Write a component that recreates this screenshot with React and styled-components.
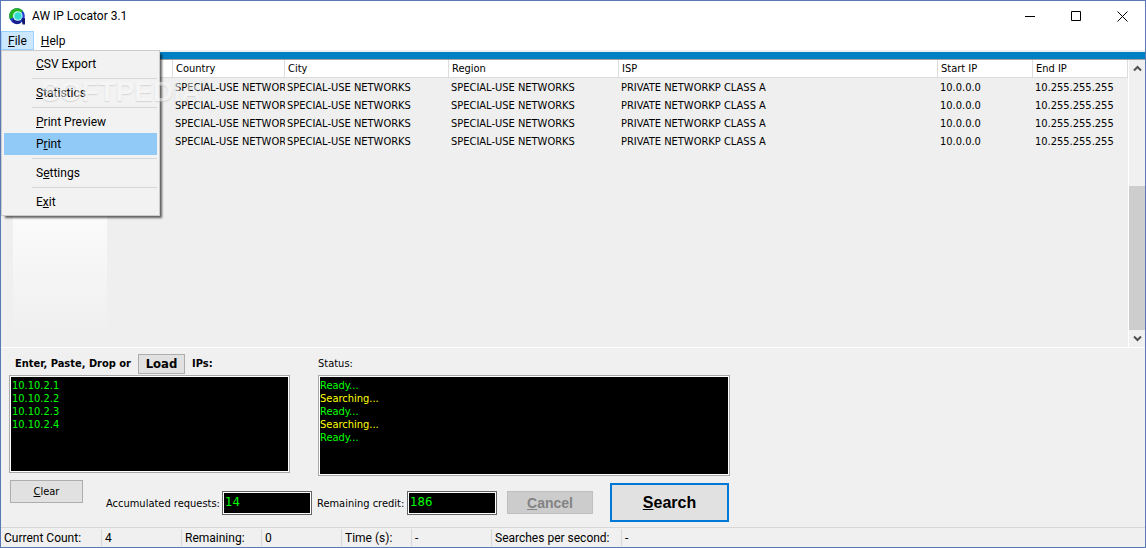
import React from "react";
import styled, { createGlobalStyle } from "styled-components";

const tahoma = `Tahoma, "DejaVu Sans Condensed", "Noto Sans", sans-serif`;
const segoe = `"Segoe UI", Roboto, "Open Sans", sans-serif`;

const GlobalStyle = createGlobalStyle`
  * {
    box-sizing: border-box;
  }
  body {
    margin: 0;
    color: #000;
    font: 11px/14px ${tahoma};
  }
  button, input, textarea {
    margin: 0;
    border-radius: 0;
    font: inherit;
    color: inherit;
  }
`;

const Window = styled.div`
  display: flex;
  flex-direction: column;
  height: 100vh;
  overflow: hidden;
  border: 1px solid #5878b8;
  background: #f0f0f0;
`;
const TitleBar = styled.header`
  display: flex;
  align-items: center;
  gap: 6px;
  height: 30px;
  padding-left: 8px;
  background: #fff;
`;
const Title = styled.h1`
  flex: 1;
  margin: 0;
  font: 12px/16px ${segoe};
`;
const WindowButtons = styled.div`
  display: flex;
`;
const WindowButton = styled.button`
  display: flex;
  align-items: center;
  justify-content: center;
  width: 46px;
  height: 28px;
  padding: 0;
  border: 0;
  background: none;
`;
const MenuBar = styled.nav`
  display: flex;
  height: 19px;
  background: #fff;
  font: 12px/16px ${segoe};
`;
const MenuWrap = styled.div`
  position: relative;
`;
const MenuButton = styled.button`
  height: 19px;
  padding: 0 6px;
  border: 1px solid ${(props) => (props.$open ? "#99d1ff" : "#fff")};
  background: ${(props) => (props.$open ? "#cce8ff" : "#fff")};
`;
const Menu = styled.div`
  position: absolute;
  z-index: 2;
  top: 19px;
  left: 0;
  width: 159px;
  padding: 2px;
  border: 1px solid #ccc;
  background: #f2f2f2;
  box-shadow: 3px 3px 2px -1px rgba(0, 0, 0, 0.6);
`;
const MenuItem = styled.button`
  display: block;
  width: 100%;
  height: 22px;
  padding: 0 0 0 32px;
  border: 0;
  text-align: left;
  background: ${(props) => (props.$active ? "#91c9f7" : "none")};
`;
const Separator = styled.hr`
  height: 1px;
  margin: 3px 0 3px 28px;
  border: 0;
  background: #d7d7d7;
`;
const Watermark = styled.div`
  position: absolute;
  z-index: 3;
  top: 43px;
  left: 40px;
  display: flex;
  font: bold 28px/36px "Liberation Sans", sans-serif;
  color: #f8f8f8;
  text-shadow: 0 1px 1px #bbb;
  opacity: 0.5;
  pointer-events: none;
`;
const Mark = styled.span`
  font-size: 8px;
  line-height: 16px;
`;
const Accent = styled.div`
  height: 10px;
  border-top: 2px solid #f0f0f0;
  border-bottom: 1px solid #a0a0a0;
  background: #0080c4;
`;
const ListView = styled.main`
  display: flex;
  flex: 1;
  min-height: 0;
  border-bottom: 1px solid #fff;
  background: #efefef;
`;
const TableArea = styled.div`
  flex: 1;
  min-width: 0;
  background: linear-gradient(#fff 40%, #efefef 95%) 12px 0 / 94px 100% no-repeat;
`;
const Table = styled.table`
  width: 100%;
  table-layout: fixed;
  border-collapse: separate;
  border-spacing: 0;
`;
const Col = styled.col`
  width: ${(props) => props.$width};
`;
const Th = styled.th`
  height: 18px;
  padding: 1px 0 0 3px;
  border-right: 1px solid #dcdcdc;
  border-bottom: 1px solid #dcdcdc;
  background: #fff;
  font-weight: 400;
  text-align: left;
`;
const Td = styled.td`
  height: 18px;
  padding: 2px 0 0 2px;
  overflow: hidden;
  white-space: nowrap;
`;
const ScrollBar = styled.div`
  display: flex;
  flex-direction: column;
  width: 17px;
  border-left: 1px solid #fff;
  background: #f0f0f0;
`;
const ScrollButton = styled.button`
  display: flex;
  align-items: center;
  justify-content: center;
  height: 17px;
  padding: 0;
  border: 0;
  background: none;
`;
const Track = styled.div`
  display: flex;
  flex: 1;
  flex-direction: column;
  justify-content: flex-end;
`;
const Thumb = styled.div`
  height: 57%;
  background: #cdcdcd;
`;
const Panel = styled.section`
  padding: 0 8px 5px;
`;
const Boxes = styled.div`
  display: flex;
  gap: 28px;
`;
const Field = styled.div`
  display: flex;
  flex-direction: column;
  width: ${(props) => props.$width};
`;
const FieldHead = styled.div`
  display: flex;
  align-items: center;
  gap: 7px;
  height: 27px;
  padding: 4px 0 0 ${(props) => (props.$bold ? "6px" : "0")};
  font-weight: ${(props) => (props.$bold ? 700 : 400)};
`;
const LoadButton = styled.button`
  width: 47px;
  height: 20px;
  padding: 0;
  border: 1px solid #adadad;
  background: #e1e1e1;
  font-size: 13px;
`;
const IpBox = styled.textarea`
  height: 98px;
  padding: 3px 2px;
  border: 1px solid #a8a8ac;
  outline: 1px solid #fff;
  outline-offset: -2px;
  background: #000;
  color: #00ff00;
  line-height: 13px;
  resize: none;
`;
const StatusBox = styled.div`
  height: 101px;
  padding: 3px 1px;
  border: 1px solid #a8a8ac;
  outline: 1px solid #fff;
  outline-offset: -2px;
  background: #000;
  line-height: 13px;
`;
const Line = styled.div`
  color: ${(props) => (props.$busy ? "#ffff00" : "#00ff00")};
`;
const Actions = styled.div`
  display: flex;
  align-items: flex-end;
  gap: 23px;
  height: 46px;
`;
const ClearButton = styled.button`
  align-self: flex-start;
  width: 73px;
  height: 23px;
  margin: 4px 0 0 1px;
  padding: 0;
  border: 1px solid #adadad;
  background: #e1e1e1;
`;
const Controls = styled.div`
  display: flex;
  align-items: center;
`;
const CounterLabel = styled.label`
  width: ${(props) => props.$width};
  padding-top: 2px;
  white-space: nowrap;
`;
const Counter = styled.input`
  width: 90px;
  height: 24px;
  margin-right: 5px;
  padding: 0 2px 2px;
  border: 1px solid #646464;
  outline: 1px solid #fff;
  outline-offset: -2px;
  background: #000;
  color: #00ff00;
  font-size: 13px;
`;
const CancelButton = styled.button`
  width: 86px;
  height: 23px;
  margin: 0 17px 0 5px;
  padding: 0;
  border: 1px solid #bfbfbf;
  background: #ccc;
  color: #838383;
  font: bold 14px/16px "Liberation Sans", Arial, sans-serif;
`;
const SearchButton = styled.button`
  width: 119px;
  height: 39px;
  padding: 0;
  border: 2px solid #0078d7;
  background: #e1e1e1;
  font: bold 16px/18px "Liberation Sans", Arial, sans-serif;
`;
const StatusBar = styled.footer`
  display: flex;
  height: 20px;
  padding-top: 1px;
  border-top: 1px solid #d7d7d7;
  font: 12px/18px ${segoe};
`;
const StatusCell = styled.span`
  width: ${(props) => props.$width};
  height: 17px;
  padding-left: 3px;
  border-right: ${(props) => (props.$last ? "0" : "1px solid #d7d7d7")};
  white-space: nowrap;
`;

const columns = [
  { title: "", width: "172px" },
  { title: "Country", width: "112px" },
  { title: "City", width: "164px" },
  { title: "Region", width: "170px" },
  { title: "ISP", width: "auto" },
  { title: "Start IP", width: "95px" },
  { title: "End IP", width: "95px" },
];
const ips = ["10.10.2.1", "10.10.2.2", "10.10.2.3", "10.10.2.4"];
const network = "SPECIAL-USE NETWORKS";
const log = ["Ready...", "Searching...", "Ready...", "Searching...", "Ready..."];
const statusCells = [
  ["Current Count:", "101px"],
  ["4", "80px"],
  ["Remaining:", "80px"],
  ["0", "80px"],
  ["Time (s):", "70px"],
  ["-", "80px"],
  ["Searches per second:", "130px"],
  ["-", "auto"],
];

const Logo = () => (
  <svg width="17" height="17" viewBox="0 0 17 17" aria-hidden="true">
    <circle cx="8" cy="8" r="7.8" fill="#1f3fd0" />
    <path d="M.8 11A7.800 7.800 0 0 1 14 3L11 6A4.200 4.200 0 0 0 4.500 9.500z" fill="#22b422" />
    <path d="M3 14a7.800 7.800 0 0 0 9 1l-2-4-5-1z" fill="#16208c" />
    <circle cx="8.800" cy="8" r="4.800" fill="#d4fbf4" />
    <circle cx="9" cy="8" r="3.700" fill="#35dcd2" />
    <path d="M12.500 10.500 16 10v6.500h-2.500z" fill="#14186c" />
  </svg>
);

const Key = ({ text, at = 0 }) => (
  <>
    {text.slice(0, at)}
    <u>{text[at]}</u>
    {text.slice(at + 1)}
  </>
);

const FileMenu = () => (
  <Menu>
    <MenuItem><Key text="CSV Export" /></MenuItem>
    <Separator />
    <MenuItem><Key text="Statistics" /></MenuItem>
    <Separator />
    <MenuItem><Key text="Print Preview" /></MenuItem>
    <MenuItem $active><Key text="Print" at={1} /></MenuItem>
    <Separator />
    <MenuItem><Key text="Settings" at={1} /></MenuItem>
    <Separator />
    <MenuItem><Key text="Exit" at={1} /></MenuItem>
  </Menu>
);

const Results = () => (
  <ListView>
    <TableArea>
      <Table>
        <colgroup>
          {columns.map((c, i) => (
            <Col key={i} $width={c.width} />
          ))}
        </colgroup>
        <thead>
          <tr>
            {columns.map((c, i) => (
              <Th key={i}>{c.title}</Th>
            ))}
          </tr>
        </thead>
        <tbody>
          {ips.map((ip) => (
            <tr key={ip}>
              <Td />
              <Td>{network}</Td>
              <Td>{network}</Td>
              <Td>{network}</Td>
              <Td>PRIVATE NETWORKP CLASS A</Td>
              <Td>10.0.0.0</Td>
              <Td>10.255.255.255</Td>
            </tr>
          ))}
        </tbody>
      </Table>
    </TableArea>
    <ScrollBar>
      <ScrollButton aria-label="Scroll up">
        <svg width="9" height="7" viewBox="0 0 9 7">
          <path d="M1 5.500 4.500 2 8 5.500" fill="none" stroke="#505050" strokeWidth="2" />
        </svg>
      </ScrollButton>
      <Track>
        <Thumb />
      </Track>
      <ScrollButton aria-label="Scroll down">
        <svg width="9" height="7" viewBox="0 0 9 7">
          <path d="M1 1.500 4.500 5 8 1.500" fill="none" stroke="#505050" strokeWidth="2" />
        </svg>
      </ScrollButton>
    </ScrollBar>
  </ListView>
);

const App = () => {
  return (
    <Window>
      <GlobalStyle />
      <TitleBar>
        <Logo />
        <Title>AW IP Locator 3.1</Title>
        <WindowButtons>
          <WindowButton aria-label="Minimize">
            <svg width="11" height="11" viewBox="0 0 11 11">
              <path d="M0 5.500h10" stroke="#000" />
            </svg>
          </WindowButton>
          <WindowButton aria-label="Maximize">
            <svg width="11" height="11" viewBox="0 0 11 11">
              <path d="M.5 .5h9v9h-9z" fill="none" stroke="#000" />
            </svg>
          </WindowButton>
          <WindowButton aria-label="Close">
            <svg width="11" height="11" viewBox="0 0 11 11">
              <path d="M.5 .5l10 10M10.500 .5l-10 10" stroke="#000" />
            </svg>
          </WindowButton>
        </WindowButtons>
      </TitleBar>
      <MenuBar>
        <MenuWrap>
          <MenuButton $open><Key text="File" /></MenuButton>
          <FileMenu />
          <Watermark>
            SOFTPEDIA
            <Mark>®</Mark>
          </Watermark>
        </MenuWrap>
        <MenuButton><Key text="Help" /></MenuButton>
      </MenuBar>
      <Accent />
      <Results />
      <Panel>
        <Boxes>
          <Field $width="281px">
            <FieldHead $bold>
              <label htmlFor="ips">Enter, Paste, Drop or</label>
              <LoadButton>Load</LoadButton>
              <span>IPs:</span>
            </FieldHead>
            <IpBox id="ips" defaultValue={ips.join("\n")} />
          </Field>
          <Field $width="412px">
            <FieldHead>Status:</FieldHead>
            <StatusBox role="log">
              {log.map((text, i) => (
                <Line key={i} $busy={text === "Searching..."}>{text}</Line>
              ))}
            </StatusBox>
          </Field>
        </Boxes>
        <Actions>
          <ClearButton><Key text="Clear" /></ClearButton>
          <Controls>
            <CounterLabel htmlFor="requests" $width="116px">Accumulated requests:</CounterLabel>
            <Counter id="requests" defaultValue="14" readOnly />
            <CounterLabel htmlFor="credit" $width="90px">Remaining credit:</CounterLabel>
            <Counter id="credit" defaultValue="186" readOnly />
            <CancelButton disabled><Key text="Cancel" /></CancelButton>
            <SearchButton><Key text="Search" /></SearchButton>
          </Controls>
        </Actions>
      </Panel>
      <StatusBar>
        {statusCells.map(([text, width], i) => (
          <StatusCell key={i} $width={width} $last={i === statusCells.length - 1}>{text}</StatusCell>
        ))}
      </StatusBar>
    </Window>
  );
};

export default App;
